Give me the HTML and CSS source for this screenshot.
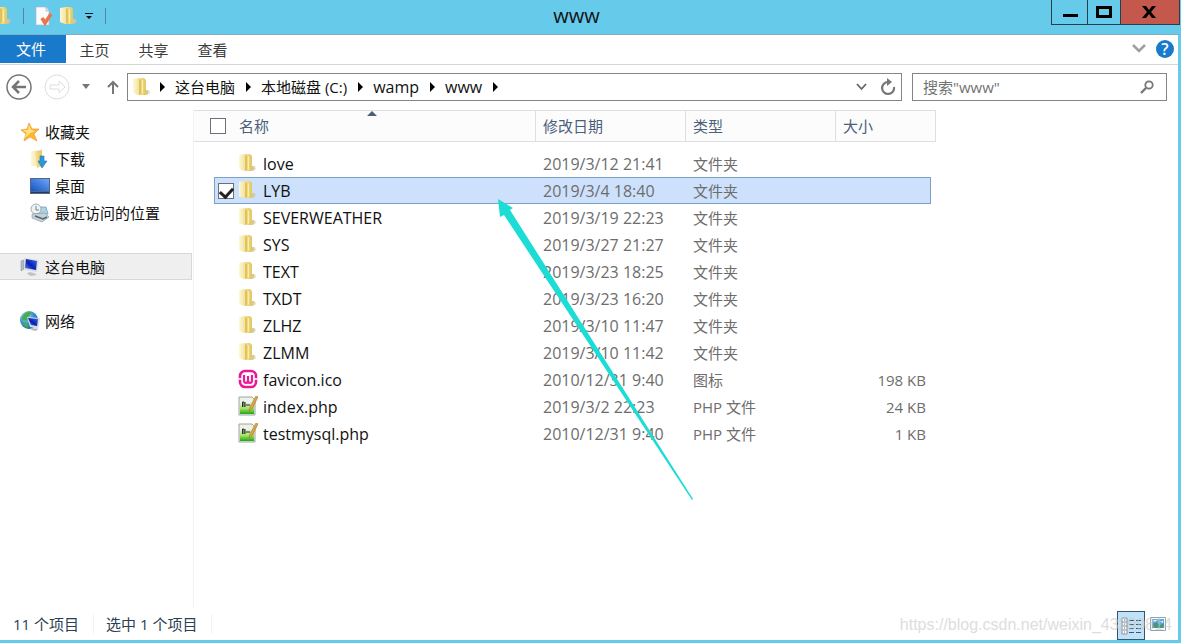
FILE: index.html
```
<!DOCTYPE html>
<html lang="zh-CN">
<head>
<meta charset="utf-8">
<title>www</title>
<link rel="stylesheet" href="styles.css">
</head>
<body>
<svg class="defs" aria-hidden="true">
  <defs>
    <linearGradient id="gold" x1="0" x2="1"><stop offset="0" stop-color="#f5e59c"/><stop offset="1" stop-color="#e3c75f"/></linearGradient>
    <linearGradient id="paper" x1="0" x2="1"><stop offset="0" stop-color="#fdf8d6"/><stop offset="1" stop-color="#f1df94"/></linearGradient>
    <linearGradient id="screen" x1="0" y1="1" x2="1" y2="0"><stop offset="0" stop-color="#5c8cf0"/><stop offset=".45" stop-color="#0a1fb4"/><stop offset="1" stop-color="#3b6be4"/></linearGradient>
    <linearGradient id="desk" x1="0" y1="1" x2="1" y2="0"><stop offset="0" stop-color="#1553c4"/><stop offset="1" stop-color="#6fa6f4"/></linearGradient>
    <linearGradient id="green" x1="0" y1="0" x2="0" y2="1"><stop offset="0" stop-color="#e6eedd"/><stop offset=".5" stop-color="#a4e35f"/><stop offset="1" stop-color="#1fa51b"/></linearGradient>
    <radialGradient id="globe" cx=".35" cy=".3" r=".8"><stop offset="0" stop-color="#b5e4f4"/><stop offset=".5" stop-color="#3995cf"/><stop offset="1" stop-color="#125a94"/></radialGradient>
    <symbol id="folder" viewBox="0 0 20 20">
      <path d="M12 13l5 0 1 3-3 2h-4z" fill="#c9c6b8" opacity=".6"/>
      <path d="M7 1h5l2 2v15l-6 0z" fill="url(#gold)"/>
      <path d="M1 2l6-1 1 1v16l-2 0-5-2z" fill="url(#paper)"/>
      <path d="M7 2l2 1v14l-2 1z" fill="#dfc25c"/>
      <path d="M10 4l1-1v13l-1 1z" fill="#faeeb4"/>
      <path d="M12 13l3 0 1 1v3l-4 1z" fill="#dfc974"/>
    </symbol>
    <symbol id="php" viewBox="0 0 20 20">
      <path d="M1 1h13l3 3v15H1z" fill="#eef1ea" stroke="#9aa89a"/>
      <path d="M2 7h14v11H2z" fill="url(#green)"/>
      <path d="M4.500 11V6h1.500v5M7 11V6M9 8v2M11 8v2" fill="none" stroke="#262b26"/>
      <path d="M18 0l2 1-6 12-3 2 1-4z" fill="#dba744" stroke="#a4772a" stroke-width=".6"/>
    </symbol>
    <symbol id="wamp" viewBox="0 0 20 20">
      <rect x="2" y="2" width="16" height="16" rx="5" fill="#fff" stroke="#ea1a97" stroke-width="2.6"/>
      <path d="M0 10h4M16 10h4" stroke="#fff" stroke-width="1.4"/>
      <path d="M6 6v5q0 3 2 3t2-3V7v4q0 3 2 3t2-3V6" fill="none" stroke="#ea1a97" stroke-width="2.2"/>
    </symbol>
  </defs>
</svg>
<div class="window">
  <header class="titlebar">
    <div class="quick">
      <svg class="ico quick-first"><use href="#folder"/></svg>
      <span class="sep"></span>
      <button class="plain" aria-label="属性"><svg class="ico" viewBox="0 0 20 20"><path d="M2 1h10l3 4v14H2z" fill="#fbfbfb" stroke="#b3bcc2" stroke-width=".7"/><path d="M12 1v4h3" fill="#dfe4e8" stroke="#9ca9b1" stroke-width=".6"/><path d="M8 12l3 5 6-9" fill="none" stroke="#e8764f" stroke-width="3.6"/></svg></button>
      <button class="plain" aria-label="新建文件夹"><svg class="ico"><use href="#folder"/></svg></button>
      <button class="plain more" aria-label="自定义快速访问工具栏"><svg width="8" height="7" viewBox="0 0 8 7"><path d="M0 0h8v1H0zM1 3h6L4 6z" fill="#111"/></svg></button>
      <span class="sep"></span>
    </div>
    <h1>www</h1>
    <div class="controls">
      <button class="min" aria-label="最小化"><svg width="16" height="3" viewBox="0 0 16 3"><path d="M1 0h15v3H1z"/></svg></button>
      <button class="max" aria-label="最大化"><svg width="16" height="12" viewBox="0 0 16 12"><path d="M1.500 1.500h13v9h-13z" fill="none" stroke="#000" stroke-width="3"/></svg></button>
      <button class="close" aria-label="关闭"><svg width="14" height="12" viewBox="0 0 14 12"><path d="M0 0h4l3 4 3-4h4L9 6l5 6h-4L7 8l-3 4H0l5-6z"/></svg></button>
    </div>
  </header>
  <div class="frame">
    <nav class="tabs">
      <button class="tab file">文件</button>
      <button class="tab">主页</button>
      <button class="tab">共享</button>
      <button class="tab">查看</button>
      <div class="tabs-end">
        <button class="plain" aria-label="展开功能区"><svg width="14" height="10" viewBox="0 0 14 10"><path d="M1 1l6 6 6-6" fill="none" stroke="#a0a0a0" stroke-width="2.600"/></svg></button>
        <button class="help" aria-label="帮助">?</button>
      </div>
    </nav>
    <div class="navbar">
      <button class="plain" aria-label="后退"><svg width="26" height="26" viewBox="0 0 26 26" fill="none" stroke="#757575"><circle cx="13" cy="13" r="12" stroke-width="1.500"/><path d="M20 13H8M13 7l-6 6 6 6" stroke-width="2.500"/></svg></button>
      <button class="plain forward" aria-label="前进"><svg width="26" height="26" viewBox="0 0 26 26" fill="none" stroke="#dedede"><circle cx="13" cy="13" r="12"/><path d="M6 11h9V7l6 6-6 6v-4H6z"/></svg></button>
      <button class="plain recent" aria-label="最近浏览的位置"><svg width="8" height="5" viewBox="0 0 8 5"><path d="M0 0h8L4 5z" fill="#777"/></svg></button>
      <button class="plain" aria-label="向上"><svg width="12" height="14" viewBox="0 0 12 14"><path d="M6 14V2M1 7l5-5 5 5" fill="none" stroke="#777" stroke-width="2"/></svg></button>
      <div class="address">
        <svg class="ico"><use href="#folder"/></svg>
        <i class="tri"></i><button class="crumb">这台电脑</button>
        <i class="tri"></i><button class="crumb">本地磁盘 (C:)</button>
        <i class="tri"></i><button class="crumb latin">wamp</button>
        <i class="tri"></i><button class="crumb latin">www</button>
        <i class="tri"></i>
        <div class="address-end">
          <button class="plain" aria-label="历史"><svg width="11" height="8" viewBox="0 0 11 8"><path d="M1 1l4.500 5L10 1" fill="none" stroke="#666" stroke-width="1.800"/></svg></button>
          <button class="plain" aria-label="刷新"><svg width="16" height="18" viewBox="0 0 16 18"><path d="M8 4a6 6 0 1 0 6 5" fill="none" stroke="#777" stroke-width="2.200"/><path d="M7 0l5 4-5 4z" fill="#777"/></svg></button>
        </div>
      </div>
      <label class="search">
        <input type="text" placeholder="搜索&quot;www&quot;" aria-label="搜索">
        <svg width="14" height="14" viewBox="0 0 14 14"><circle cx="9" cy="5" r="3.700" fill="none" stroke="#777" stroke-width="1.800"/><path d="M6 8l-5 5" stroke="#777" stroke-width="2.400"/></svg>
      </label>
    </div>
    <main class="content">
      <aside class="side">
        <a class="place" href="#"><svg class="ico" viewBox="0 0 20 20"><path d="M9 1l3 6 7 0-5 5 3 7-7-4-6 4 2-7-5-4 6-1z" fill="#fbb72e" stroke="#f29a38" stroke-width=".7"/><path d="M9 3l2 5 4 1-5 2-5 5 2-5-4-3 5 0z" fill="#ffe58a"/></svg>收藏夹</a>
        <a class="place sub" href="#"><svg class="ico" viewBox="0 0 20 20"><path d="M1 2h10v15H1z" fill="url(#paper)"/><path d="M5 2l7-1v16l-5 2z" fill="url(#gold)"/><path d="M10 7h4v5h3l-5 7-4-7h2z" fill="#3096d6" stroke="#1d77b3" stroke-width=".6"/></svg>下载</a>
        <a class="place sub" href="#"><svg class="ico" viewBox="0 0 20 20"><path d="M0 2h20v16H0z" fill="#526783"/><path d="M1 3h18v12H1z" fill="url(#desk)"/><path d="M1 16h18v1H1z" fill="#233c5c"/></svg>桌面</a>
        <a class="place sub" href="#"><svg class="ico" viewBox="0 0 20 20"><path d="M6 4h10l2 7H5z" fill="#a9d4e8" stroke="#6e91a4" stroke-width=".7"/><circle cx="6" cy="6" r="5" fill="#edf3f4" stroke="#9fb0b6"/><path d="M6 3v4h3" fill="none" stroke="#728389"/><path d="M2 11l13-1 4 4-7 5-10-4z" fill="#c9d0d3" stroke="#85949b" stroke-width=".6"/><path d="M5 13l8 3 4-2" fill="none" stroke="#48697a" stroke-width="1.500"/></svg>最近访问的位置</a>
        <a class="place group current" href="#"><svg class="ico" viewBox="0 0 20 20"><path d="M1 4l3-1v9l-3 2z" fill="#b5bac1" stroke="#858b93" stroke-width=".5"/><path d="M4 1l15 2-2 12-12-2z" fill="#d8dde3"/><path d="M6 2l11 2-1 9-11-2z" fill="url(#screen)"/><path d="M9 15l5 1 3 2-6 1-4-2z" fill="#bfc3c8"/></svg>这台电脑</a>
        <a class="place group" href="#"><svg class="ico" viewBox="0 0 20 20"><circle cx="9" cy="9" r="9" fill="url(#globe)"/><path d="M4 3q5-4 8-1l-3 3-2 5-5-1q0-4 2-6zM3 11l5 2v4l-4-2z" fill="#48aa51"/><path d="M7 6l13 1-2 11-8-2z" fill="#d4dae2"/><path d="M8 7l10 1-1 7-6-1z" fill="url(#screen)"/><path d="M12 17l6 1-2 2-5-1z" fill="#b4b9c0"/></svg>网络</a>
      </aside>
      <section class="files">
        <table>
          <colgroup><col class="c-edge"><col><col class="c-date"><col class="c-type"><col class="c-size"><col class="c-end"></colgroup>
          <thead>
            <tr>
              <th colspan="2" class="name-head"><div class="head"><input type="checkbox" class="check" aria-label="全选"><span>名称</span></div><i class="sort"></i></th>
              <th>修改日期</th><th>类型</th><th colspan="2">大小</th>
            </tr>
          </thead>
          <tbody>
            <tr><td></td><td><div class="file-name"><svg class="ico"><use href="#folder"/></svg>love</div></td><td>2019/3/12 21:41</td><td>文件夹</td><td></td><td></td></tr>
            <tr class="selected"><td></td><td><div class="file-name"><input type="checkbox" class="check" checked aria-label="选择 LYB"><svg class="ico"><use href="#folder"/></svg>LYB</div></td><td>2019/3/4 18:40</td><td>文件夹</td><td></td><td></td></tr>
            <tr><td></td><td><div class="file-name"><svg class="ico"><use href="#folder"/></svg>SEVERWEATHER</div></td><td>2019/3/19 22:23</td><td>文件夹</td><td></td><td></td></tr>
            <tr><td></td><td><div class="file-name"><svg class="ico"><use href="#folder"/></svg>SYS</div></td><td>2019/3/27 21:27</td><td>文件夹</td><td></td><td></td></tr>
            <tr><td></td><td><div class="file-name"><svg class="ico"><use href="#folder"/></svg>TEXT</div></td><td>2019/3/23 18:25</td><td>文件夹</td><td></td><td></td></tr>
            <tr><td></td><td><div class="file-name"><svg class="ico"><use href="#folder"/></svg>TXDT</div></td><td>2019/3/23 16:20</td><td>文件夹</td><td></td><td></td></tr>
            <tr><td></td><td><div class="file-name"><svg class="ico"><use href="#folder"/></svg>ZLHZ</div></td><td>2019/3/10 11:47</td><td>文件夹</td><td></td><td></td></tr>
            <tr><td></td><td><div class="file-name"><svg class="ico"><use href="#folder"/></svg>ZLMM</div></td><td>2019/3/10 11:42</td><td>文件夹</td><td></td><td></td></tr>
            <tr><td></td><td><div class="file-name"><svg class="ico"><use href="#wamp"/></svg>favicon.ico</div></td><td>2010/12/31 9:40</td><td>图标</td><td>198 KB</td><td></td></tr>
            <tr><td></td><td><div class="file-name"><svg class="ico"><use href="#php"/></svg>index.php</div></td><td>2019/3/2 22:23</td><td>PHP 文件</td><td>24 KB</td><td></td></tr>
            <tr><td></td><td><div class="file-name"><svg class="ico"><use href="#php"/></svg>testmysql.php</div></td><td>2010/12/31 9:40</td><td>PHP 文件</td><td>1 KB</td><td></td></tr>
          </tbody>
        </table>
        <svg class="pointer" viewBox="0 0 195 301" aria-hidden="true"><path d="M0 0l15 9-3 2 183 289-1 1L6 16l-4 2z" fill="#1cdcd6"/></svg>
      </section>
    </main>
    <footer class="status">
      <span>11 个项目</span>
      <span>选中 1 个项目</span>
      <div class="views">
        <button class="view on" aria-label="详细信息"><svg width="20" height="18" viewBox="0 0 20 18"><path d="M1 1h5v16H1z" fill="#fff" stroke="#829299"/><path d="M1 5h5M1 9h5M1 13h5" stroke="#829299"/><path d="M3 3h1M3 7h1M3 11h1M3 15h1" stroke="#c04a3c"/><path d="M8 3.500h5M15 3.500h5M8 7.500h5M15 7.500h5M8 11.500h5M15 11.500h5M8 15.500h5M15 15.500h5" stroke="#425465"/></svg></button>
        <button class="view" aria-label="大图标"><svg width="16" height="14" viewBox="0 0 16 14"><path d="M.5.5h15v13H.5z" fill="#fff" stroke="#8aa7b6"/><path d="M2 2h12v9H2z" fill="#5fabd9"/><path d="M2 8l4-3 4 3 4-2v5H2z" fill="#4b9484"/><path d="M3 3h4l-2 2zM10 4h3v2z" fill="#e8f6fb"/></svg></button>
      </div>
    </footer>
    <div class="watermark">https://blog.csdn.net/weixin_43299814</div>
  </div>
</div>
</body>
</html>
```

FILE: styles.css
```
* { box-sizing: border-box; }
body {
  margin: 0;
  font: 15px/20px "Open Sans", "Noto Sans CJK SC", sans-serif;
  color: #111;
}
button, input { font: inherit; color: inherit; }
button { padding: 0; border: 0; background: none; }
svg { display: block; flex: none; }
.defs { position: absolute; width: 0; height: 0; }
.ico { width: 20px; height: 20px; }
.plain { display: flex; align-items: center; justify-content: center; }

.window { min-height: 100vh; display: flex; flex-direction: column; background: #66caea; }
.titlebar {
  display: grid;
  grid-template-columns: 1fr auto 1fr;
  height: 35px;
  border-bottom: 1px solid #7fafc2;
}
.quick { display: flex; align-items: center; gap: 5px; padding-bottom: 2px; }
.quick-first { margin-left: -7px; }
.sep { width: 1px; height: 16px; margin: 0 5px; background: #54859a; }
.more { width: 10px; margin: 0 1px 0 0; }
h1 { margin: 0; font-size: 20px; line-height: 32px; font-weight: 400; padding-right: 28px; }
.controls { display: flex; justify-content: flex-end; align-items: flex-start; padding-right: 1px; }
.controls button {
  display: flex;
  align-items: center;
  justify-content: center;
  height: 25px;
  padding-bottom: 1px;
  border: solid #24404c;
  border-width: 0 0 1px 1px;
}
.controls .min { width: 36px; padding-top: 8px; }
.max { width: 33px; }
.controls .close { width: 60px; padding-right: 2px; background: #c4584c; border-right-width: 1px; }

.frame {
  position: relative;
  flex: 1;
  display: flex;
  flex-direction: column;
  margin: 0 3px 3px 0;
  background: #fff;
}
.tabs { display: flex; height: 30px; border-bottom: 1px solid #d5d7d9; color: #3c3c3c; }
.tab { width: 59px; padding-right: 2px; }
.tab.file { width: 66px; height: 28px; padding-right: 4px; background: #1979ca; color: #fff; }
.tabs-end { display: flex; align-items: center; gap: 10px; margin-left: auto; padding: 0 4px 2px 0; }
.help { width: 18px; height: 18px; border-radius: 50%; background: #1979ca; color: #fff; font-size: 16px; font-weight: 600; line-height: 18px; }

.navbar { display: flex; align-items: center; height: 45px; padding: 0 11px 2px 6px; }
.forward { margin-left: 12px; }
.recent { margin: 0 17px 0 12px; }
.address {
  flex: 1;
  display: flex;
  align-items: center;
  height: 28px;
  margin-left: 8px;
  padding: 0 5px 0 4px;
  border: 1px solid #858585;
}
.address .ico { margin-right: 2px; }
.tri {
  border: solid transparent;
  border-width: 5px 0 5px 5px;
  border-left-color: #000;
  margin: 0 10px 0 11px;
}
.address .ico + .tri { margin-left: 6px; }
.crumb { white-space: nowrap; }
.latin { font-size: 16px; }
.address-end { display: flex; align-items: center; gap: 13px; margin-left: auto; }
.search {
  display: flex;
  align-items: center;
  width: 255px;
  height: 28px;
  margin-left: 10px;
  padding: 0 12px 0 10px;
  border: 1px solid #858585;
}
.search input { flex: 1; min-width: 0; padding: 0; border: 0; outline: 0; background: none; }
.search input::placeholder { color: #737373; opacity: 1; }

.content { flex: 1; display: flex; }
.side { width: 194px; padding-top: 8px; border-right: 1px solid #f2f3f5; }
.place {
  display: flex;
  align-items: center;
  gap: 5px;
  height: 27px;
  padding-left: 20px;
  color: #111;
  text-decoration: none;
}
.place.sub { padding-left: 30px; }
.place.group { margin-top: 27px; }
.place.current { margin-right: 1px; background: #efefef; border: 1px solid #d8d8d8; border-left: 0; }

.files { position: relative; }
table { width: 742px; table-layout: fixed; border-collapse: separate; border-spacing: 0; color: #6d6d6d; }
.c-edge { width: 20px; }
.c-date, .c-type { width: 150px; }
.c-size { width: 95px; }
.c-end { width: 5px; }
th {
  height: 32px;
  padding: 0 0 0 7px;
  border: solid #dedfe1;
  border-width: 1px 1px 1px 0;
  background: #fcfcfc;
  color: #4c607a;
  font-weight: 400;
  text-align: left;
}
.name-head { position: relative; padding-left: 16px; }
.head { display: flex; align-items: center; gap: 13px; }
.sort {
  position: absolute;
  top: 0;
  left: 173px;
  border: solid transparent;
  border-width: 0 5px 5px;
  border-bottom-color: #4c607a;
}
tbody::before { content: ""; display: block; height: 8px; }
td { height: 27px; padding: 0 0 0 7px; white-space: nowrap; }
td:first-child, td:last-child { padding: 0; }
td:nth-child(2) { padding: 0 0 0 4px; color: #111; font-size: 16px; }
td:nth-child(3) { font-size: 16px; }
td:nth-child(5) { text-align: right; padding-right: 5px; }
.file-name { display: flex; align-items: center; gap: 5px; padding-left: 20px; }
.file-name .ico { margin-bottom: 1px; }
.selected .file-name { padding-left: 0; }
.file-name .check { margin-right: -1px; }
.selected td:not(:first-child, :last-child) {
  background: #cde1fc;
  border: solid #7da2c4;
  border-width: 1px 0;
}
.selected td:nth-child(2) { padding-left: 3px; }
.selected td:nth-child(2):not(:first-child) { border-left-width: 1px; }
.selected td:nth-child(5):not(:last-child) { border-right-width: 1px; }
.check {
  appearance: none;
  display: flex;
  justify-content: center;
  align-items: flex-start;
  flex: none;
  width: 16px;
  height: 16px;
  margin: 0;
  border: 1px solid #68707a;
  background: #fff;
}
.check:checked::before {
  content: "";
  width: 6px;
  height: 10px;
  margin-top: 1px;
  border: solid #222;
  border-width: 0 3px 3px 0;
  transform: rotate(42deg);
}
.pointer { position: absolute; left: 304px; top: 89px; width: 195px; height: 301px; }

.status { display: flex; align-items: center; height: 32px; padding: 0 7px 0 13px; color: #2b4054; }
.status span { padding-right: 14px; margin-right: 12px; border-right: 1px solid #f3f3f3; }
.views { display: flex; margin-left: auto; align-self: stretch; padding-top: 3px; }
.view { display: grid; place-items: center; width: 26px; padding-bottom: 3px; }
.view.on { width: 28px; padding: 0; border: 1px solid #35566c; background: #bfe2f8; }
.watermark {
  position: absolute;
  right: 6px;
  bottom: 5px;
  color: #c8c8c8;
  opacity: .6;
  font: 16px/20px "Liberation Sans", Arial, sans-serif;
  pointer-events: none;
}
```
